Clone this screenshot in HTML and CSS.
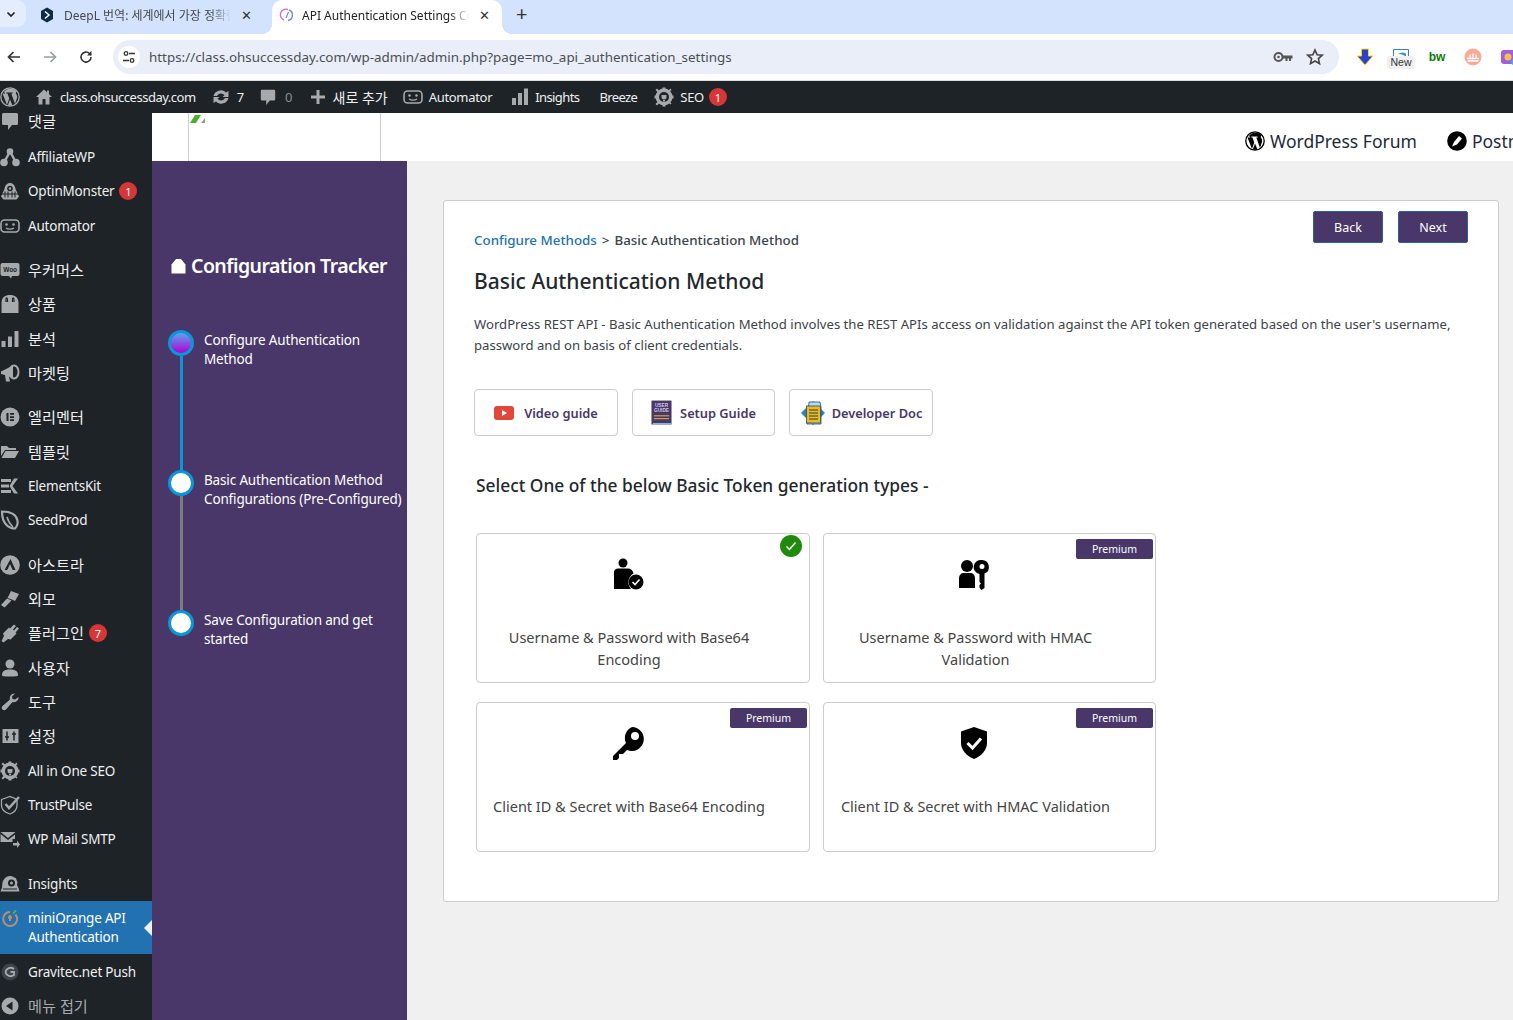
FILE: index.html
```html
<!DOCTYPE html>
<html lang="ko">
<head>
    <meta charset="UTF-8">
    <meta name="viewport" content="width=device-width, initial-scale=1.0">
    <title>API Authentication Settings</title>
    <link rel="stylesheet" href="styles.css">
</head>
<body>
    <!-- Browser tabs -->
    <div class="tabstrip">
        <div class="tab-menu">
            <svg width="12" height="12" viewBox="0 0 12 12"><path d="M2.500 4.500 6 8l3.500-3.500" fill="none" stroke="#222" stroke-width="1.700"/></svg>
        </div>
        <div class="tab tab-first">
            <svg class="tab-icon" width="16" height="16" viewBox="0 0 16 16"><path d="M8 0.500 14 4v8l-6 3.500L2 12V4z" fill="#0f2b46"/><path d="M6 4.500 10 8l-4 3.500" fill="none" stroke="#fff" stroke-width="1.500"/></svg>
            <span class="tab-title">DeepL 번역: 세계에서 가장 정확한</span>
            <span class="tab-close">✕</span>
        </div>
        <div class="tab tab-active">
            <svg class="tab-icon" width="16" height="16" viewBox="0 0 16 16"><path d="M5 13A5.500 5.500 0 0 1 9 2.500" fill="none" stroke="#d46fc0" stroke-width="1.400"/><path d="M10 3a5.500 5.500 0 0 1-1 10.500" fill="none" stroke="#6a8fe0" stroke-width="1.400"/><path d="M7 11 9.500 5" fill="none" stroke="#8a7ad8" stroke-width="1.200"/></svg>
            <span class="tab-title">API Authentication Settings Con</span>
            <span class="tab-close">✕</span>
        </div>
        <span class="tab-new">+</span>
    </div>

    <!-- Browser toolbar -->
    <div class="toolbar">
        <div class="nav-btn"><svg width="16" height="16" viewBox="0 0 16 16"><path d="M14 8H3M7.500 3 2.500 8l5 5" fill="none" stroke="#333" stroke-width="1.700"/></svg></div>
        <div class="nav-btn"><svg width="16" height="16" viewBox="0 0 16 16"><path d="M2 8h11M8.500 3l5 5-5 5" fill="none" stroke="#9a9ea4" stroke-width="1.700"/></svg></div>
        <div class="nav-btn"><svg width="16" height="16" viewBox="0 0 16 16"><path d="M13 8a5 5 0 1 1-1.500-3.500L13 6" fill="none" stroke="#333" stroke-width="1.600"/><path d="M13.500 1.800V6.500H9z" fill="#333"/></svg></div>
        <div class="omnibox">
            <div class="site-info">
                <svg width="14" height="14" viewBox="0 0 14 14"><g fill="none" stroke="#333" stroke-width="1.300"><circle cx="4" cy="3.500" r="1.800"/><path d="M7 3.500h6M1 10.500h6"/><circle cx="10" cy="10.500" r="1.800"/></g></svg>
            </div>
            <span class="url">https://class.ohsuccessday.com/wp-admin/admin.php?page=mo_api_authentication_settings</span>
            <svg class="omni-key" width="20" height="12" viewBox="0 0 20 12"><circle cx="5.500" cy="6" r="4" fill="none" stroke="#555" stroke-width="2"/><circle cx="5.500" cy="6" r="1.300" fill="#555"/><path d="M9 4.500h10.500v3H18V10h-2V7.500h-1.500V10h-2V7.500H9z" fill="#555"/></svg>
            <svg class="omni-star" width="18" height="18" viewBox="0 0 18 18"><path d="m9 2 2.100 4.700 5.100.5-3.800 3.400 1.100 5L9 13l-4.500 2.600 1.100-5-3.800-3.400 5.100-.5z" fill="none" stroke="#444" stroke-width="1.600"/></svg>
        </div>
        <div class="ext"><svg width="18" height="18" viewBox="0 0 18 18"><path d="M5.500 1h7v7H17l-8 9-8-9h4.500z" fill="#2e3fd0" stroke="#f5e400" stroke-width="1"/></svg></div>
        <div class="ext ext-new">
            <svg width="16" height="9" viewBox="0 0 16 9"><path d="M0.500 9V0.500h15V9" fill="#fff" stroke="#3a7fc0"/><path d="M5 5c3-2 6-2 8 0v3c-2-2-4-3-8-3z" fill="#3a8fd0"/></svg>
            <span class="new-label">New</span>
        </div>
        <div class="ext"><span class="ext-bw">bw</span></div>
        <div class="ext"><svg width="18" height="18" viewBox="0 0 18 18"><circle cx="9" cy="9" r="8.500" fill="#f9ab98"/><path d="M3 10.500h12M3.500 13h11" stroke="#fff" stroke-width="1.300"/><path d="M6 6.500v4M9 5.500v5M12 6.500v4" stroke="#fff" stroke-width="1.200"/></svg></div>
        <div class="ext"><svg width="18" height="18" viewBox="0 0 18 18"><rect x="1" y="2" width="16" height="14" rx="3" fill="#a35de0"/><circle cx="8" cy="9" r="3.500" fill="#f3c341"/><circle cx="14" cy="14" r="3" fill="#35b7d8"/></svg></div>
    </div>

    <!-- WP admin bar -->
    <div class="adminbar">
        <svg class="ab-wp" width="20" height="20" viewBox="0 0 20 20"><use href="#i-wp"/></svg>
        <svg class="ab-home" width="18" height="18" viewBox="0 0 18 18"><path d="M9 1.500 1 9h2.500v7.500H7.500V11h3v5.500h4V9H17l-3-2.800V2.500h-2v1.800z" fill="#a7aaad"/></svg>
        <span class="ab-site">class.ohsuccessday.com</span>
        <svg class="ab-update" width="18" height="18" viewBox="0 0 18 18"><path d="M1.500 8a7.500 7.500 0 0 1 12.500-3.500L16.500 3v6h-6l2-1.800A4.500 4.500 0 0 0 5 8zM16.500 10A7.500 7.500 0 0 1 4 13.500L1.500 15V9h6l-2 1.800A4.500 4.500 0 0 0 13 10z" fill="#a7aaad"/></svg>
        <span class="ab-count">7</span>
        <svg class="ab-comment" width="18" height="18" viewBox="0 0 20 20"><use href="#i-comment"/></svg>
        <span class="ab-zero">0</span>
        <svg class="ab-plus" width="16" height="16" viewBox="0 0 16 16"><path d="M6.500 1h3v5.500H15v3H9.500V15h-3V9.500H1v-3h5.500z" fill="#a7aaad"/></svg>
        <span class="ab-new">새로 추가</span>
        <svg class="ab-auto" width="20" height="20" viewBox="0 0 20 20"><use href="#i-automator"/></svg>
        <span class="ab-auto-text">Automator</span>
        <svg class="ab-insights" width="18" height="18" viewBox="0 0 18 18"><path d="M1 10h4v7H1zM7 5h4v12H7zM13 0.500h4V17h-4z" fill="#a7aaad"/></svg>
        <span class="ab-insights-text">Insights</span>
        <span class="ab-breeze">Breeze</span>
        <svg class="ab-seo" width="20" height="20" viewBox="0 0 20 20"><use href="#i-gear"/></svg>
        <span class="ab-seo-text">SEO</span>
        <span class="badge ab-badge">1</span>
    </div>

    <div class="layout">
        <!-- Admin menu -->
        <div class="sidebar">
            <div class="menu">
                <div class="menu-item first"><svg viewBox="0 0 20 20"><use href="#i-comment"/></svg><span class="ko">댓글</span></div>
                <div class="menu-item gap-s"><svg viewBox="0 0 20 20"><circle cx="10" cy="4.500" r="3.300"/><circle cx="4" cy="15.500" r="3.800"/><circle cx="16" cy="15.500" r="3.800"/><path d="M10 4.500 4 15.500M10 4.500l6 11" stroke="#a7aaad" stroke-width="2.500"/></svg><span>AffiliateWP</span></div>
                <div class="menu-item"><svg viewBox="0 0 20 20"><path d="M10 2c3 0 5 2.500 5.500 6l3.500 7.500-2.500 3h-13L1 15.500 4.500 8C5 4.500 7 2 10 2z"/><circle cx="10" cy="7.500" r="2.800" fill="#1d2327"/><circle cx="10" cy="7.500" r="1.200"/><path d="M1.500 13h17M5 10.500v6M8 10.500v6M12 10.500v6M15 10.500v6" stroke="#1d2327"/></svg><span>OptinMonster</span><span class="badge">1</span></div>
                <div class="menu-item"><svg viewBox="0 0 20 20"><use href="#i-automator"/></svg><span>Automator</span></div>
                <div class="menu-item gap"><svg viewBox="0 0 20 20"><rect x="0.500" y="3" width="19" height="13" rx="2"/><path d="M9 16h3l-1 2.500z"/><text x="10" y="12" text-anchor="middle" class="woo-text">Woo</text></svg><span class="ko">우커머스</span></div>
                <div class="menu-item"><svg viewBox="0 0 20 20"><path d="M1.500 8.500C2 3 5 1 10 1s8 2 8.500 7.500V19h-17z"/><path d="M6 8V6c0-3 1.500-3 1.500 0v2M12.500 8V6c0-3 1.500-3 1.500 0v2" fill="none" stroke="#1d2327" stroke-width="1.200"/></svg><span class="ko">상품</span></div>
                <div class="menu-item"><svg viewBox="0 0 20 20"><path d="M1.500 12h4v6h-4zM8 7.500h4V18H8zM14.500 2h4v16h-4z"/></svg><span class="ko">분석</span></div>
                <div class="menu-item"><svg viewBox="0 0 20 20"><path d="M1 8.500 13 2.500v13L9 13.500l1 5H6l-1-6.500-4-1z"/><ellipse cx="14" cy="9" rx="4.500" ry="6.500" fill="none" stroke="#a7aaad" stroke-width="2"/></svg><span class="ko">마켓팅</span></div>
                <div class="menu-item gap"><svg viewBox="0 0 20 20"><circle cx="10" cy="10" r="9.500"/><path d="M6.500 6h2v8h-2zM10 6h4v1.700h-4zM10 9.200h4v1.700h-4zM10 12.300h4V14h-4z" fill="#1d2327"/></svg><span class="ko">엘리멘터</span></div>
                <div class="menu-item"><svg viewBox="0 0 20 20"><path d="M1 4h6l2 2h7v2H5L1 14zM1.500 16 5.500 9H19l-4 7z"/></svg><span class="ko">템플릿</span></div>
                <div class="menu-item"><svg viewBox="0 0 20 20"><path d="M1 3h10v3H1zM1 8.500h8v3H1zM1 14h10v3H1zM18 2.500 12.500 10l5.500 7.500h-4L9.500 10 14 2.500z"/></svg><span>ElementsKit</span></div>
                <div class="menu-item"><svg viewBox="0 0 20 20"><path d="M2 1.500c7 0 14 2 15.500 9 .500 3-.500 6-2.500 8C9 18.500 2 14 2 1.500z" fill="none" stroke="#a7aaad" stroke-width="2.200"/><path d="M7 7c1 4 3 7 6 10" fill="none" stroke="#a7aaad" stroke-width="1.500"/></svg><span>SeedProd</span></div>
                <div class="menu-item gap"><svg viewBox="0 0 20 20"><circle cx="10" cy="10" r="9.800"/><path d="M10.500 4 15.500 15h-2.800L10 9l-2.800 6H4.500z" fill="#1d2327"/></svg><span class="ko">아스트라</span></div>
                <div class="menu-item"><svg viewBox="0 0 20 20"><path d="M11 2 19 5l-4 7-2-1-5.500-2zM7 9.500l4.500 2-7 7L1 16z"/></svg><span class="ko">외모</span></div>
                <div class="menu-item"><svg viewBox="0 0 20 20"><path d="M14 1.500 16 3l-3 3.500 1 1 3-3.500 2 1.500-3.500 4 1 1-6 6-2.500-.500-4.500 3.500L1.500 18 4 13 3 10.500l6-6 1 1z"/></svg><span class="ko">플러그인</span><span class="badge">7</span></div>
                <div class="menu-item"><svg viewBox="0 0 20 20"><circle cx="10" cy="6" r="4.500"/><path d="M2 17c0-4 3-5.500 8-5.500s8 1.500 8 5.500c0 1-1 1.500-8 1.500S2 18 2 17z"/></svg><span class="ko">사용자</span></div>
                <div class="menu-item"><svg viewBox="0 0 20 20"><path d="M18.500 5c.500 3-2.500 6-6 5L6 17.500c-1 1-2.500 1-3.500 0s-1-2.500 0-3.500L10 7.500c-1-3.500 2-6.500 5-6l-3 3 .500 2.500 2.500.500z"/></svg><span class="ko">도구</span></div>
                <div class="menu-item"><svg viewBox="0 0 20 20"><path d="M2.500 3h16v14h-16z"/><path d="M7 5.500v9M14 5.500v9M5 11h4M12 8h4" stroke="#1d2327" stroke-width="1.500"/></svg><span class="ko">설정</span></div>
                <div class="menu-item"><svg viewBox="0 0 20 20"><use href="#i-gear"/></svg><span>All in One SEO</span></div>
                <div class="menu-item"><svg viewBox="0 0 20 20"><path d="M1.500 4.500 10 1.500l7 3v6c0 4-3 7-7 8.500-5-1.500-8.500-4.500-8.500-8.500z" fill="none" stroke="#a7aaad" stroke-width="1.300"/><path d="m5.500 9 3.500 4L19 2" fill="none" stroke="#a7aaad" stroke-width="2.500"/></svg><span>TrustPulse</span></div>
                <div class="menu-item"><svg viewBox="0 0 20 20"><path d="M0.500 3h15L8 9zM0.500 5l7.500 6 7-5.500V10h-2.500v3H0.500z"/><path d="M13 14h4v-2.500l3 4-3 3.500v-2.500h-4z"/></svg><span>WP Mail SMTP</span></div>
                <div class="menu-item gap"><svg viewBox="0 0 20 20"><path d="M10 2c1.500 0 3 .500 4 1.500l2 .500.500 2 1 2-.500 3 1.500 3 1 3.500H0.500L2 13.500l.500-5C3.500 5 6 2 10 2z"/><circle cx="11.500" cy="9" r="3.500" fill="#1d2327"/><circle cx="11.500" cy="9" r="1.500"/><path d="M3 15h14" stroke="#1d2327"/></svg><span>Insights</span></div>
                <div class="menu-item active">
                    <svg viewBox="0 0 20 20"><path d="M15.500 5.500A7 7 0 1 1 10 3" fill="none" stroke="#b89070" stroke-width="2"/><path d="M10 6v6" stroke="#b89070" stroke-width="2"/><circle cx="10" cy="8.500" r="2" fill="#b89070"/><path d="M13 4.500 16 1.500" stroke="#58b050" stroke-width="1.800"/></svg>
                    <span>miniOrange API<br>Authentication</span>
                </div>
                <div class="menu-item"><svg viewBox="0 0 20 20"><circle cx="10" cy="10" r="8.500" fill="#3c434a"/><path d="M14 7a5 4 0 1 0 0 6v-3h-3.500" fill="none" stroke="#a7aaad" stroke-width="1.800"/></svg><span>Gravitec.net Push</span></div>
                <div class="menu-item muted"><svg viewBox="0 0 20 20"><circle cx="10" cy="10" r="8.500"/><path d="M12.500 5.500v9L6 10z" fill="#1d2327"/></svg><span class="ko">메뉴 접기</span></div>
            </div>
        </div>

        <div class="main">
            <!-- Plugin header -->
            <div class="plugin-header">
                <div class="logo-box">
                    <svg width="16" height="8" viewBox="0 0 16 8"><path d="M0 8 5 0h10v8z" fill="#fff"/><path d="M0 8 5 0h6L6 8z" fill="#4caf2e"/><path d="M11 8 15 3v5z" fill="#999"/></svg>
                </div>
                <div class="header-links">
                    <span class="header-link"><svg width="20" height="20" viewBox="0 0 20 20" class="black-icon"><use href="#i-wp"/></svg>WordPress Forum</span>
                    <span class="header-link"><svg width="20" height="20" viewBox="0 0 20 20"><circle cx="10" cy="10" r="9.800" fill="#000"/><path d="M5 15.500 7 11l5-6 3 2.500-5 6z" fill="#fff"/></svg>Postman Samples</span>
                </div>
            </div>

            <div class="columns">
                <!-- Tracker -->
                <div class="tracker">
                    <div class="tracker-title">
                        <svg width="15" height="16" viewBox="0 0 15 16"><path d="M0.500 15.500V6.500L5 1h5l4.500 5.500v9z" fill="#fff"/></svg>
                        Configuration Tracker
                    </div>
                    <div class="steps">
                        <div class="step">
                            <div class="step-rail"><div class="dot dot-current"></div><div class="rail-line rail-done"></div></div>
                            <div class="step-label">Configure Authentication Method</div>
                        </div>
                        <div class="step">
                            <div class="step-rail"><div class="dot"></div><div class="rail-line"></div></div>
                            <div class="step-label">Basic Authentication Method Configurations (Pre-Configured)</div>
                        </div>
                        <div class="step">
                            <div class="step-rail"><div class="dot"></div></div>
                            <div class="step-label">Save Configuration and get started</div>
                        </div>
                    </div>
                </div>

                <!-- Main card -->
                <div class="content">
                    <div class="panel">
                        <div class="panel-top">
                            <div class="breadcrumb"><a class="crumb-link">Configure Methods</a><span class="crumb-sep">&gt;</span>Basic Authentication Method</div>
                            <div class="panel-actions">
                                <button class="btn">Back</button>
                                <button class="btn">Next</button>
                            </div>
                        </div>
                        <h1 class="panel-title">Basic Authentication Method</h1>
                        <p class="panel-desc">WordPress REST API - Basic Authentication Method involves the REST APIs access on validation against the API token generated based on the user's username, password and on basis of client credentials.</p>

                        <div class="guides">
                            <div class="guide guide-video">
                                <svg width="20" height="14" viewBox="0 0 20 14"><rect width="20" height="14" rx="3" fill="#e0483c"/><path d="M8 4v6l5-3z" fill="#fff"/></svg>
                                Video guide
                            </div>
                            <div class="guide guide-setup">
                                <svg width="21" height="25" viewBox="0 0 22 26"><rect x="0.500" y="0.500" width="21" height="25" fill="#483768"/><path d="M2 24h19v1H2z" fill="#7cc0e8"/><path d="M3 16h16v1H3z" fill="#f5c430"/><path d="M3 19h16v1H3z" fill="#f5c430"/><text x="11" y="7" text-anchor="middle" class="book-text">USER</text><text x="11" y="13" text-anchor="middle" class="book-text">GUIDE</text></svg>
                                Setup Guide
                            </div>
                            <div class="guide guide-dev">
                                <svg width="26" height="26" viewBox="0 0 26 26"><path d="M13 1 25 13 13 25 1 13z" fill="#2f7fc4"/><path d="M9 2h11l1 5v17H7z" fill="#b9d8ef" stroke="#1d4f80" stroke-width="0.800"/><rect x="6.500" y="6" width="14" height="17" fill="#f5b916" stroke="#1d4f80" stroke-width="0.800"/><path d="M9 10h9M9 13h9M9 16h9M9 19h9" stroke="#1d3f66" stroke-width="1.200"/></svg>
                                Developer Doc
                            </div>
                        </div>

                        <h2 class="section-title">Select One of the below Basic Token generation types -</h2>

                        <div class="method-grid">
                            <div class="method">
                                <span class="check-mark"><svg width="14" height="14" viewBox="0 0 14 14"><path d="m2.500 7.500 3 3 6-7" fill="none" stroke="#fff" stroke-width="1.500"/></svg></span>
                                <svg class="method-icon" width="34" height="34" viewBox="0 0 34 34"><circle cx="12" cy="6" r="4.500"/><path d="M7 11.500h10c3 0 5 2 5.500 5A10 10 0 0 0 20 32H3V15c0-2 2-3.500 4-3.500z"/><circle cx="25" cy="25" r="7.500"/><path d="m21.500 25 2.500 2.500 4.500-5" fill="none" stroke="#fff" stroke-width="1.600"/></svg>
                                <div class="method-name">Username &amp; Password with Base64 Encoding</div>
                            </div>
                            <div class="method">
                                <span class="premium">Premium</span>
                                <svg class="method-icon" width="34" height="34" viewBox="0 0 34 34"><circle cx="10" cy="9" r="6"/><path d="M2 31V21c0-3 2-5 4.500-5h7c2.500 0 4.500 2 4.500 5v10z"/><path fill-rule="evenodd" d="M25 3a7 7 0 0 1 2.500 13.500V31l-3 2-2-2v-3l1.500-1.500-1.500-1.500v-8A7 7 0 0 1 25 3zm0 4a2.500 2.500 0 1 0 0 5 2.500 2.500 0 0 0 0-5z"/></svg>
                                <div class="method-name">Username &amp; Password with HMAC Validation</div>
                            </div>
                            <div class="method">
                                <span class="premium">Premium</span>
                                <svg class="method-icon" width="34" height="34" viewBox="0 0 34 34"><path fill-rule="evenodd" d="M21 1a12 12 0 1 1-5 23l-4 4H8v4l-2 2H2v-4l13-13A12 12 0 0 1 21 1zm3 5a4 4 0 1 0 0 8 4 4 0 0 0 0-8z"/></svg>
                                <div class="method-name">Client ID &amp; Secret with Base64 Encoding</div>
                            </div>
                            <div class="method">
                                <span class="premium">Premium</span>
                                <svg class="method-icon" width="34" height="34" viewBox="0 0 34 34"><path d="M17 1 30 5.500V17c0 7-5.500 13-13 16C9.500 30 4 24 4 17V5.500z"/><path d="m10.500 17 5 5 8.500-9.500" fill="none" stroke="#fff" stroke-width="3"/></svg>
                                <div class="method-name">Client ID &amp; Secret with HMAC Validation</div>
                            </div>
                        </div>
                    </div>
                </div>
            </div>
        </div>
    </div>

    <!-- Shared icons -->
    <svg class="sprite" width="0" height="0">
        <symbol id="i-wp" viewBox="0 0 20 20">
            <circle cx="10" cy="10" r="9.200" fill="none" stroke="currentColor" stroke-width="1.300"/>
            <path d="M2.500 6.500 7 18l2.200-6.500L7.500 6.500H6.300V5.500h6.400v1h-1.400L15 17l2-6c.500-2-.500-3.500-1-4.500-.500-1 .200-2 1-2A8.500 8.500 0 0 0 3.500 5.500H5v1zM10 12.500 7.800 18.500a8.500 8.500 0 0 0 4.700-.1z" fill="currentColor"/>
        </symbol>
        <symbol id="i-comment" viewBox="0 0 20 20">
            <path d="M3.500 2h13A1.500 1.500 0 0 1 18 3.500v9a1.500 1.500 0 0 1-1.500 1.500H12l-4 5v-5H3.500A1.500 1.500 0 0 1 2 12.500v-9A1.500 1.500 0 0 1 3.500 2z" fill="#a7aaad"/>
        </symbol>
        <symbol id="i-automator" viewBox="0 0 20 20">
            <rect x="1" y="4" width="18" height="12" rx="3.500" fill="none" stroke="#a7aaad" stroke-width="1.600"/>
            <circle cx="6.500" cy="8.500" r="1.300" fill="#a7aaad"/><circle cx="13.500" cy="8.500" r="1.300" fill="#a7aaad"/>
            <path d="M6 12c2 1.500 6 1.500 8 0" fill="none" stroke="#a7aaad" stroke-width="1.300"/>
        </symbol>
        <symbol id="i-gear" viewBox="0 0 20 20">
            <circle cx="10" cy="10" r="8.500" fill="#a7aaad"/>
            <path d="M8.500 0.500h3v3h-3zM8.500 16.500h3v3h-3zM0.500 8.500h3v3h-3zM16.500 8.500h3v3h-3zM3 1.500 5.500 4 4 5.500 1.500 3zM15 14l2.500 2.500-1 1L14 15zM1.500 17l2.500-2.500L5.500 16 3 18.500zM14 4l2.500-2.500 1 1.500L15 5.500z" fill="#a7aaad"/>
            <circle cx="10" cy="10" r="5" fill="#1d2327"/><path d="M7.500 8h5v2a2.500 2.500 0 0 1-5 0zM9 13h2v1.500H9z" fill="#a7aaad"/>
        </symbol>
    </svg>
</body>
</html>
```
FILE: styles.css
```css
* {
    box-sizing: border-box;
}

html, body {
    height: 100%;
}

body {
    margin: 0;
    width: 1513px;
    height: 1020px;
    overflow: hidden;
    font-family: "Noto Sans", "Noto Sans CJK KR", sans-serif;
    background-color: #f0f0f0;
    color: #3c434a;
}

.sprite {
    display: block;
}

/* Browser tabs */
.tabstrip {
    display: flex;
    height: 34px;
    background-color: #d3e3fd;
    overflow: hidden;
    align-items: flex-start;
}

.tab-menu {
    width: 26px;
    height: 27px;
    display: flex;
    align-items: center;
    justify-content: center;
    padding-right: 4px;
    background-color: #e4edfc;
    border-radius: 0 9px 9px 0;
    flex-shrink: 0;
}

.tab {
    position: relative;
    display: flex;
    align-items: center;
    height: 34px;
    font-size: 12px;
    color: #45494e;
    flex-shrink: 0;
}

.tab-first {
    margin-left: 13px;
    width: 233px;
}

.tab-active {
    width: 230px;
    padding-left: 7px;
    background-color: #fff;
    border-radius: 10px 10px 0 0;
    color: #222;
}

.tab-icon {
    flex-shrink: 0;
    margin-right: 9px;
    margin-bottom: 4px;
}

.tab-active .tab-icon {
    margin-right: 7px;
}

.tab-title {
    width: 167px;
    white-space: nowrap;
    overflow: hidden;
    margin-bottom: 4px;
    -webkit-mask-image: linear-gradient(to right, #000 88%, transparent);
    mask-image: linear-gradient(to right, #000 88%, transparent);
}

.tab-close {
    margin-left: 10px;
    margin-bottom: 4px;
    font-size: 13px;
    color: #333;
}

.tab-active::before,
.tab-active::after {
    content: "";
    position: absolute;
    bottom: 0;
    width: 10px;
    height: 10px;
}

.tab-active::before {
    left: -10px;
    background: radial-gradient(circle at 0 0, transparent 10px, #fff 10px);
}

.tab-active::after {
    right: -10px;
    background: radial-gradient(circle at 100% 0, transparent 10px, #fff 10px);
}

.tab-new {
    margin-left: 14px;
    font-size: 20px;
    line-height: 28px;
    color: #333;
}

/* Browser toolbar */
.toolbar {
    display: flex;
    align-items: center;
    height: 47px;
    padding-bottom: 1px;
    margin-left: -4px;
    width: 1517px;
    background-color: #fff;
    border-bottom: 1px solid #ddd;
}

.nav-btn {
    width: 36px;
    display: flex;
    justify-content: center;
    flex-shrink: 0;
}

.omnibox {
    display: flex;
    align-items: center;
    width: 1226px;
    height: 34px;
    margin-left: 9px;
    margin-right: 8px;
    padding-left: 5px;
    background-color: #e9eef8;
    border-radius: 17px;
    flex-shrink: 0;
}

.site-info {
    width: 22px;
    height: 22px;
    display: flex;
    align-items: center;
    justify-content: center;
    background-color: #fff;
    border-radius: 50%;
}

.url {
    margin-left: 9px;
    font-size: 13.4px;
    color: #4a4e54;
    flex: 1;
}

.omni-key {
    margin-right: 13px;
}

.omni-star {
    margin-right: 15px;
}

.ext {
    width: 36px;
    height: 34px;
    display: flex;
    flex-direction: column;
    align-items: center;
    justify-content: center;
    flex-shrink: 0;
}

.ext-new {
    justify-content: flex-start;
    padding-top: 9px;
}

.new-label {
    margin-top: -2px;
    padding: 0 3px;
    font-family: "Liberation Sans", sans-serif;
    font-size: 10.5px;
    line-height: 13px;
    color: #333;
    background-color: #f0f0f0;
    border-radius: 3px;
}

.ext-bw {
    font-family: "Liberation Sans", sans-serif;
    font-size: 12px;
    font-weight: bold;
    color: #0a7d0a;
}

/* Admin bar */
.adminbar {
    display: flex;
    align-items: center;
    height: 32px;
    background-color: #1d2327;
    color: #f0f0f1;
    font-size: 13px;
    white-space: nowrap;
}

.adminbar svg {
    flex-shrink: 0;
    color: #a7aaad;
}

.ab-wp { margin-right: 15px; }
.ab-home { margin-right: 7px; }
.ab-site { letter-spacing: -0.49px; margin-right: 16px; }
.ab-update { margin-right: 7px; }
.ab-count { margin-right: 15px; }
.ab-comment { margin-right: 8px; }
.ab-zero { color: #8c8f94; margin-right: 17px; }
.ab-plus { margin-right: 7px; }
.ab-new { margin-right: 15px; font-size: 14px; }
.ab-auto { margin-right: 6px; }
.ab-auto-text { letter-spacing: -0.3px; margin-right: 19px; }
.ab-insights { margin-right: 6px; }
.ab-insights-text { letter-spacing: -0.6px; margin-right: 20px; }
.ab-breeze { letter-spacing: -0.6px; margin-right: 17px; }
.ab-seo { margin-right: 6px; }
.ab-seo-text { letter-spacing: -0.3px; }

.badge {
    display: inline-flex;
    align-items: center;
    justify-content: center;
    width: 18px;
    height: 18px;
    margin-left: 5px;
    border-radius: 50%;
    background-color: #d63638;
    color: #fff;
    font-size: 11px;
    flex-shrink: 0;
}

/* Page */
.layout {
    display: flex;
    height: 907px;
}

.sidebar {
    width: 152px;
    height: 100%;
    background-color: #1d2327;
    overflow: hidden;
    flex-shrink: 0;
}

.menu {
    margin-top: -9px;
}

.menu-item {
    display: flex;
    align-items: center;
    height: 34.33px;
    color: #f0f0f1;
    font-size: 13.5px;
    letter-spacing: -0.2px;
    white-space: nowrap;
}

.menu-item svg {
    width: 20px;
    height: 20px;
    margin-right: 8px;
    fill: #a7aaad;
    flex-shrink: 0;
}

.menu-item .ko {
    margin-bottom: 2px;
    font-size: 15.2px;
    letter-spacing: 0;
}

.menu-item .badge {
    letter-spacing: 0;
}

.menu-item.gap {
    margin-top: 10px;
}

.menu-item.gap-s {
    margin-top: 1.5px;
}

.woo-text {
    font-family: "Liberation Sans", sans-serif;
    font-size: 6.5px;
    font-weight: bold;
    fill: #1d2327;
}

.menu-item.active {
    position: relative;
    height: 53px;
    margin-bottom: 1px;
    align-items: flex-start;
    padding-top: 8px;
    line-height: 19px;
    background-color: #2271b1;
    color: #fff;
}

.menu-item.active::after {
    content: "";
    position: absolute;
    right: 0;
    top: 19px;
    border: 8px solid transparent;
    border-right-color: #f0f0f1;
    border-left-width: 0;
}

.menu-item.muted {
    color: #a7aaad;
}

.main {
    flex: 1;
    min-width: 0;
}

.plugin-header {
    display: flex;
    height: 48px;
    padding-left: 36px;
    background-color: #fff;
    overflow: hidden;
}

.logo-box {
    width: 193px;
    padding-left: 1px;
    border-left: 1px solid #ccc;
    border-right: 1px solid #ccc;
    line-height: 8px;
    flex-shrink: 0;
}

.header-links {
    display: flex;
    align-items: center;
    gap: 30px;
    margin-left: 864px;
    padding-top: 8px;
    white-space: nowrap;
}

.header-link {
    display: flex;
    align-items: center;
    gap: 5px;
    font-size: 17.5px;
    color: #1d2a3a;
}

.black-icon {
    color: #000;
}

.columns {
    display: flex;
    height: 859px;
}

/* Tracker */
.tracker {
    width: 255px;
    padding: 91px 4px 0 16px;
    background-color: #483768;
    color: #fff;
    flex-shrink: 0;
}

.tracker-title {
    display: flex;
    align-items: center;
    gap: 5px;
    padding-left: 3px;
    font-size: 19.5px;
    font-weight: 600;
    letter-spacing: -0.55px;
    line-height: 28px;
    white-space: nowrap;
}

.steps {
    margin-top: 50px;
}

.step {
    display: flex;
    height: 140px;
    gap: 10px;
}

.step-rail {
    display: flex;
    flex-direction: column;
    align-items: center;
    width: 26px;
    flex-shrink: 0;
}

.dot {
    width: 26px;
    height: 26px;
    background-color: #fff;
    border: 3px solid #0a96d8;
    border-radius: 50%;
    flex-shrink: 0;
}

.dot-current {
    background: linear-gradient(#5aa5f0, #b000d0);
}

.rail-line {
    flex: 1;
    width: 3px;
    background-color: #7d7d7d;
}

.rail-done {
    background-color: #0a96d8;
}

.step-label {
    padding-top: 1px;
    font-size: 13.5px;
    line-height: 19px;
    letter-spacing: -0.15px;
}

/* Main card */
.content {
    flex: 1;
    padding: 39px 14px 0 36px;
    min-width: 0;
}

.panel {
    height: 702px;
    padding: 0 30px;
    background-color: #fff;
    border: 1px solid #ccc;
    border-radius: 3px;
}

.panel-top {
    display: flex;
    justify-content: space-between;
    align-items: flex-start;
    padding-top: 10px;
}

.breadcrumb {
    margin-top: 19px;
    font-size: 13.35px;
    line-height: 20px;
    font-weight: 500;
    color: #3c434a;
}

.crumb-link {
    color: #2271b1;
}

.crumb-sep {
    margin: 0 5px;
}

.panel-actions {
    display: flex;
    gap: 15px;
}

.btn {
    width: 70px;
    height: 32px;
    padding: 0;
    font-family: inherit;
    font-size: 12.5px;
    color: #fff;
    background-color: #483768;
    border: 1px solid #2b5f9a;
    border-radius: 2px;
}

.panel-title {
    margin: 16px 0 0;
    font-size: 21px;
    line-height: 30px;
    font-weight: 500;
    color: #23282d;
}

.panel-desc {
    margin: 18px 0 0;
    font-size: 13.15px;
    line-height: 21px;
    color: #3c434a;
}

.guides {
    display: flex;
    gap: 14px;
    margin-top: 33px;
}

.guide {
    display: flex;
    align-items: center;
    justify-content: center;
    height: 47px;
    background-color: #fff;
    border: 1px solid #ccc;
    border-radius: 4px;
    font-size: 12.8px;
    font-weight: 600;
    color: #483768;
    white-space: nowrap;
}

.guide-video {
    width: 144px;
    gap: 10px;
}

.guide-setup {
    width: 143px;
    gap: 8px;
}

.guide-dev {
    width: 144px;
    gap: 6px;
}

.section-title {
    margin: 36px 0 0 2px;
    font-size: 17.35px;
    line-height: 26px;
    font-weight: 500;
    color: #23282d;
}

.method-grid {
    display: grid;
    grid-template-columns: 334px 333px;
    grid-auto-rows: 150px;
    column-gap: 13px;
    row-gap: 19px;
    margin: 35px 0 0 2px;
}

.method {
    position: relative;
    display: flex;
    flex-direction: column;
    align-items: center;
    padding: 23px 36px 0 8px;
    border: 1px solid #ccc;
    border-radius: 4px;
}

.method-icon {
    flex-shrink: 0;
    margin-right: 3px;
}

.method-name {
    margin-top: 35px;
    font-size: 14.5px;
    line-height: 22px;
    text-align: center;
    color: #444;
}

.premium {
    position: absolute;
    top: 5px;
    right: 2px;
    width: 77px;
    height: 20px;
    background-color: #483768;
    border-radius: 2px;
    color: #fff;
    font-size: 10.5px;
    line-height: 20px;
    text-align: center;
}

.check-mark {
    position: absolute;
    top: 1px;
    right: 7px;
    display: flex;
    align-items: center;
    justify-content: center;
    width: 22px;
    height: 22px;
    border-radius: 50%;
    background-color: #218a0c;
}

.book-text {
    font-family: "Liberation Sans", sans-serif;
    font-size: 5px;
    font-weight: bold;
    fill: #cfc8e0;
}
```
